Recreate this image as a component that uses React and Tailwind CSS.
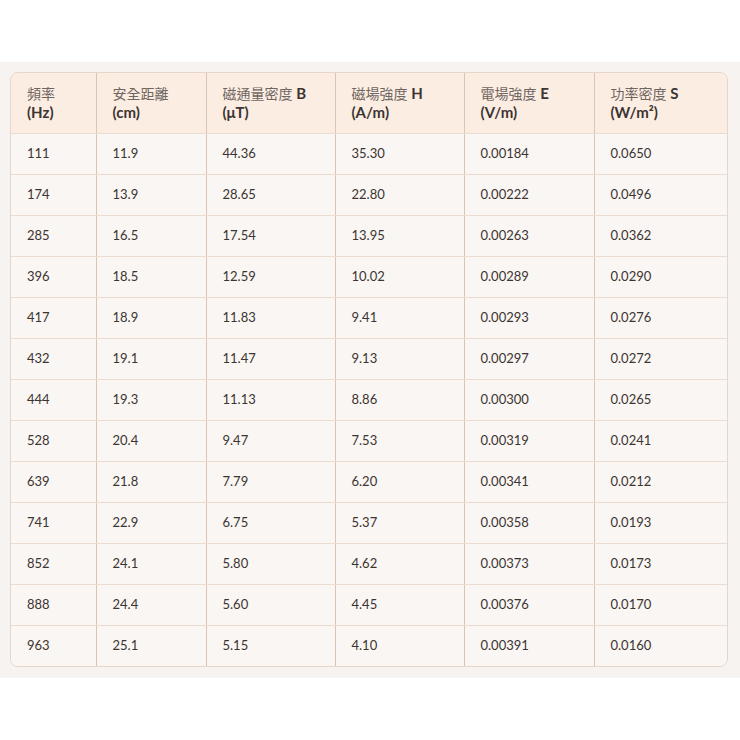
const headers = [
  { zh: "頻率", en: "", unit: "(Hz)" },
  { zh: "安全距離", en: "", unit: "(cm)" },
  { zh: "磁通量密度", en: "B", unit: "(μT)" },
  { zh: "磁場強度", en: "H", unit: "(A/m)" },
  { zh: "電場強度", en: "E", unit: "(V/m)" },
  { zh: "功率密度", en: "S", unit: "(W/m²)" },
];

const rows = [
  ["111", "11.9", "44.36", "35.30", "0.00184", "0.0650"],
  ["174", "13.9", "28.65", "22.80", "0.00222", "0.0496"],
  ["285", "16.5", "17.54", "13.95", "0.00263", "0.0362"],
  ["396", "18.5", "12.59", "10.02", "0.00289", "0.0290"],
  ["417", "18.9", "11.83", "9.41", "0.00293", "0.0276"],
  ["432", "19.1", "11.47", "9.13", "0.00297", "0.0272"],
  ["444", "19.3", "11.13", "8.86", "0.00300", "0.0265"],
  ["528", "20.4", "9.47", "7.53", "0.00319", "0.0241"],
  ["639", "21.8", "7.79", "6.20", "0.00341", "0.0212"],
  ["741", "22.9", "6.75", "5.37", "0.00358", "0.0193"],
  ["852", "24.1", "5.80", "4.62", "0.00373", "0.0173"],
  ["888", "24.4", "5.60", "4.45", "0.00376", "0.0170"],
  ["963", "25.1", "5.15", "4.10", "0.00391", "0.0160"],
];

const widths = ["w-[85px]", "w-[110px]", "w-[129px]", "w-[129px]", "w-[130px]", "w-[135px]"];

const App = () => {
  return (
    <div
      className="min-h-[740px] bg-white pt-[62px]"
      style={{ fontFamily: 'Lato, "Noto Sans CJK TC", sans-serif' }}
    >
      <div className="bg-[#f7f3f0] pt-[10px] pb-[11px] pl-[10px] pr-[12px]">
        <div className="overflow-hidden rounded-lg border border-[#e6d6ca]">
          <table className="w-full table-fixed border-collapse text-[13px] text-[#3b3431]">
            <thead>
              <tr className="h-[60px] bg-[#fcede3]">
                {headers.map((h, i) => (
                  <th
                    key={i}
                    className={`${widths[i]} border-b border-[#ecdcd0] ${
                      i > 0 ? "border-l border-l-[#dcc4b2]" : ""
                    } px-4 text-left align-middle text-[15px] font-bold leading-[19px]`}
                  >
                    <div>
                      <span className="text-[14px] font-normal text-[#6f6660]">{h.zh}</span>
                      {h.en && <span> {h.en}</span>}
                    </div>
                    <div>{h.unit}</div>
                  </th>
                ))}
              </tr>
            </thead>
            <tbody className="bg-[#faf6f3]">
              {rows.map((r, ri) => (
                <tr key={ri} className="h-[41px]">
                  {r.map((c, ci) => (
                    <td
                      key={ci}
                      className={`${
                        ri < rows.length - 1 ? "border-b border-[#ecdcd0]" : ""
                      } ${ci > 0 ? "border-l border-l-[#dcc4b2]" : ""} px-4 align-middle`}
                    >
                      {c}
                    </td>
                  ))}
                </tr>
              ))}
            </tbody>
          </table>
        </div>
      </div>
    </div>
  );
};

export default App;
